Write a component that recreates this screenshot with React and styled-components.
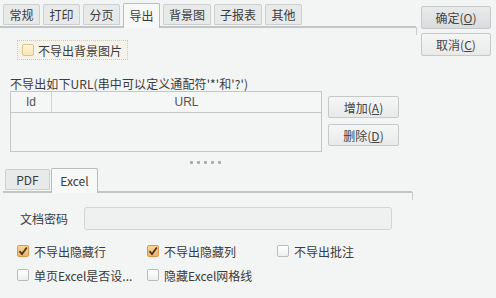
import React from "react";
import styled, { createGlobalStyle } from "styled-components";

const GlobalStyle = createGlobalStyle`
  html, body {
    margin: 0;
    padding: 0;
    background: #f3f4f4;
  }
  body {
    font-family: "Noto Sans CJK SC", "Liberation Sans", sans-serif;
    font-size: 12px;
    color: #3b3b3b;
  }
`;

const Dialog = styled.div`
  display: flex;
  width: 496px;
  height: 298px;
  overflow: hidden;
  background: #f3f4f4;
`;

const Main = styled.div`
  width: 416px;
  display: flex;
  flex-direction: column;
`;

const TabBar = styled.div`
  position: relative;
  display: flex;
  align-items: flex-end;
  gap: ${(p) => p.$gap || 2}px;
  height: ${(p) => p.$height}px;
  padding-left: ${(p) => p.$indent}px;
  margin-right: ${(p) => p.$trim || 0}px;
  border-bottom: 2px solid #c3c5c6;
  box-sizing: border-box;
  &::after {
    content: "";
    position: absolute;
    right: -1px;
    bottom: -9px;
    width: 1px;
    height: 8px;
    background: #c9cbcc;
  }
`;

const Tab = styled.div`
  height: ${(p) => (p.$active ? 25 : 21)}px;
  margin-bottom: ${(p) => (p.$active ? -2 : 1)}px;
  padding: 0 ${(p) => p.$pad || 5}px;
  display: flex;
  align-items: center;
  justify-content: center;
  min-width: ${(p) => p.$min || 0}px;
  box-sizing: border-box;
  background: ${(p) => (p.$active ? "#f7f8f8" : "#e8eaea")};
  border: 1px solid ${(p) => (p.$active ? "#b9bbbc" : "#cdcfd0")};
  border-bottom: ${(p) => (p.$active ? "none" : "1px solid #cdcfd0")};
  border-radius: 2px 2px 0 0;
  line-height: 16px;
  white-space: nowrap;
  color: #3b3b3b;
`;

const Body = styled.div`
  display: flex;
  flex-direction: column;
  padding-left: 10px;
`;

const DashedGroup = styled.label`
  display: flex;
  align-items: center;
  gap: 4px;
  width: 111px;
  height: 20px;
  box-sizing: border-box;
  margin: 12px 0 0 7px;
  padding-left: 4px;
  border: 1px dotted #d6caa4;
  background: #f6f3ea;
`;

const Box = styled.span`
  width: 12px;
  height: 12px;
  flex: none;
  box-sizing: border-box;
  border-radius: 2px;
  border: 1px solid ${(p) => (p.$checked ? "#d59b4a" : p.$warm ? "#dcc48a" : "#b9bbbc")};
  background: ${(p) =>
    p.$checked
      ? "linear-gradient(#fbd49a, #f1b463)"
      : p.$warm
      ? "linear-gradient(#fff6df, #fbe6b4)"
      : "linear-gradient(#ffffff, #eef0f0)"};
  display: flex;
  align-items: center;
  justify-content: center;
`;

const Hint = styled.div`
  margin-top: 17px;
  line-height: 14px;
  letter-spacing: 0.1px;
  white-space: nowrap;
`;

const UrlRow = styled.div`
  display: flex;
  align-items: flex-start;
  gap: 6px;
`;

const Table = styled.div`
  width: 312px;
  height: 61px;
  box-sizing: border-box;
  border: 1px solid #c4c6c7;
  background: #f3f4f4;
`;

const HeadRow = styled.div`
  display: grid;
  grid-template-columns: 41px 1fr;
  height: 20px;
  border-bottom: 1px solid #c4c6c7;
  background: #f5f6f6;
`;

const HeadCell = styled.div`
  display: flex;
  align-items: center;
  justify-content: center;
  border-right: ${(p) => (p.$divider ? "1px solid #d0d2d3" : "none")};
  font-family: "Liberation Sans", "Noto Sans CJK SC", sans-serif;
  font-size: 12px;
  color: #555;
`;

const SideButtons = styled.div`
  display: flex;
  flex-direction: column;
  gap: ${(p) => p.$gap}px;
  padding-top: ${(p) => p.$top}px;
  margin-left: ${(p) => p.$left || 0}px;
`;

const Button = styled.button`
  width: ${(p) => p.$w}px;
  height: ${(p) => p.$h}px;
  padding: 0;
  box-sizing: border-box;
  border: 1px solid #c6c8c9;
  border-radius: 2px;
  background: ${(p) =>
    p.$primary
      ? "linear-gradient(#e9ebeb, #d9dbdc)"
      : "linear-gradient(#f5f6f6, #e8eaea)"};
  font-family: "Noto Sans CJK SC", "Liberation Sans", sans-serif;
  font-size: 12px;
  color: #444;
  u {
    text-decoration: underline;
  }
`;

const Dots = styled.div`
  display: flex;
  gap: 4px;
  margin: 9px 0 0 180px;
`;

const Dot = styled.span`
  width: 3px;
  height: 3px;
  border-radius: 1px;
  background: #a9abac;
`;

const SubPanel = styled.div`
  display: flex;
  flex-direction: column;
  margin-top: 6px;
  margin-left: -7px;
`;

const FieldRow = styled.div`
  display: flex;
  align-items: center;
  gap: 16px;
  margin: 14px 0 0 17px;
`;

const Input = styled.div`
  width: 308px;
  height: 23px;
  box-sizing: border-box;
  border: 1px solid #d2d4d5;
  border-radius: 3px;
  background: #eff0f0;
`;

const OptionGrid = styled.div`
  display: grid;
  grid-template-columns: repeat(3, 130px);
  row-gap: 6px;
  margin: 12px 0 0 14px;
`;

const Option = styled.label`
  display: flex;
  align-items: center;
  gap: 5px;
  height: 18px;
  white-space: nowrap;
`;

const Check = () => (
  <svg width="10" height="10" viewBox="0 0 10 10">
    <path d="M1.5 5.2 L4 8 L8.8 1.5" fill="none" stroke="#4a3520" strokeWidth="1.8" />
  </svg>
);

const tabs = ["常规", "打印", "分页", "导出", "背景图", "子报表", "其他"];

const options = [
  { label: "不导出隐藏行", checked: true },
  { label: "不导出隐藏列", checked: true },
  { label: "不导出批注", checked: false },
  { label: "单页Excel是否设...", checked: false },
  { label: "隐藏Excel网格线", checked: false },
];

export default function App() {
  return (
    <Dialog>
      <GlobalStyle />
      <Main>
        <TabBar $height={28} $indent={3} $gap={3}>
          {tabs.map((t) => (
            <Tab key={t} $active={t === "导出"} $min={t.length === 2 ? 37 : 45}>
              {t}
            </Tab>
          ))}
        </TabBar>
        <Body>
          <DashedGroup>
            <Box $warm />
            <span>不导出背景图片</span>
          </DashedGroup>
          <Hint>不导出如下URL(串中可以定义通配符'*'和'?')</Hint>
          <UrlRow>
            <Table>
              <HeadRow>
                <HeadCell $divider>Id</HeadCell>
                <HeadCell>URL</HeadCell>
              </HeadRow>
            </Table>
            <SideButtons $gap={6} $top={5}>
              <Button $w={71} $h={22}>
                增加(<u>A</u>)
              </Button>
              <Button $w={71} $h={22}>
                删除(<u>D</u>)
              </Button>
            </SideButtons>
          </UrlRow>
          <Dots>
            {[0, 1, 2, 3, 4].map((i) => (
              <Dot key={i} />
            ))}
          </Dots>
          <SubPanel>
            <TabBar $height={23} $indent={2} $gap={1} $trim={4}>
              <Tab $min={45}>PDF</Tab>
              <Tab $active $min={47}>
                Excel
              </Tab>
            </TabBar>
            <FieldRow>
              <span>文档密码</span>
              <Input />
            </FieldRow>
            <OptionGrid>
              {options.map((o) => (
                <Option key={o.label}>
                  <Box $checked={o.checked}>{o.checked && <Check />}</Box>
                  <span>{o.label}</span>
                </Option>
              ))}
            </OptionGrid>
          </SubPanel>
        </Body>
      </Main>
      <SideButtons $gap={4} $top={6} $left={5}>
        <Button $primary $w={70} $h={23}>
          确定(<u>O</u>)
        </Button>
        <Button $w={70} $h={23}>
          取消(<u>C</u>)
        </Button>
      </SideButtons>
    </Dialog>
  );
}
